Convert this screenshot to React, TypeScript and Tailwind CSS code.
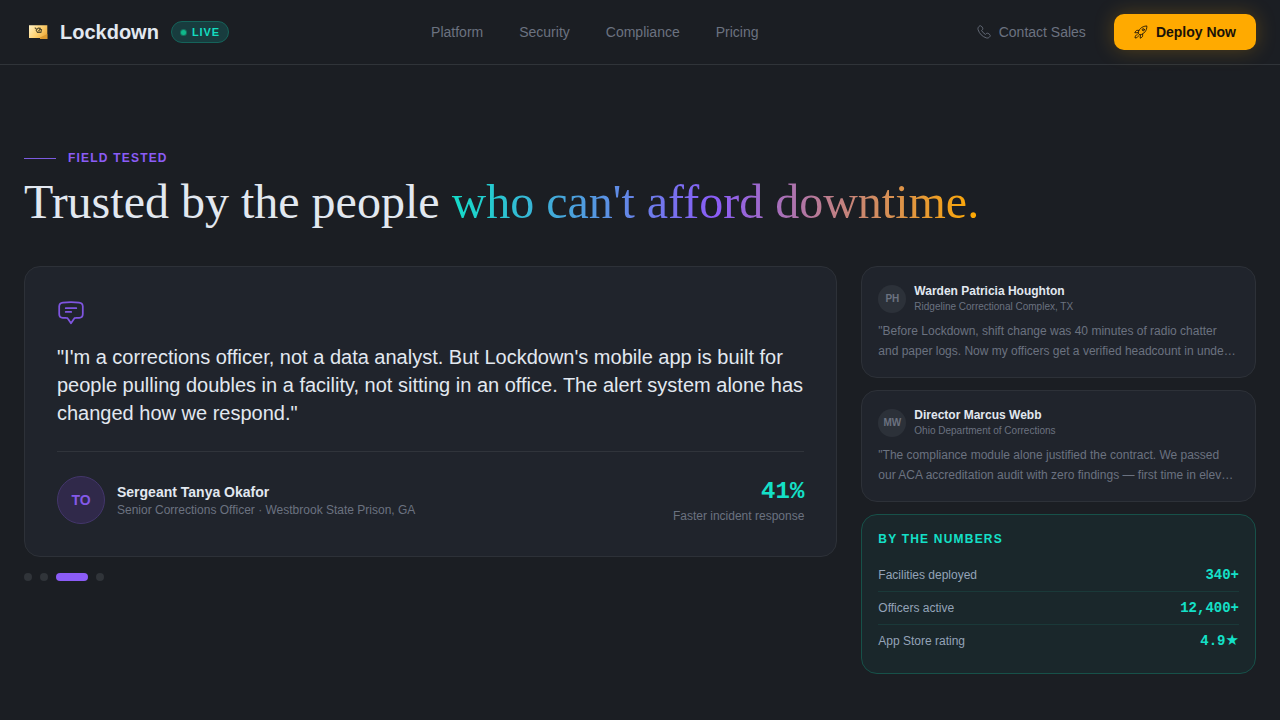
const links = ["Platform", "Security", "Compliance", "Pricing"];

const voices = [
  {
    initials: "PH",
    name: "Warden Patricia Houghton",
    place: "Ridgeline Correctional Complex, TX",
    quote:
      "\"Before Lockdown, shift change was 40 minutes of radio chatter and paper logs. Now my officers get a verified headcount in under four minutes.\"",
  },
  {
    initials: "MW",
    name: "Director Marcus Webb",
    place: "Ohio Department of Corrections",
    quote:
      "\"The compliance module alone justified the contract. We passed our ACA accreditation audit with zero findings — first time in eleven years.\"",
  },
];

const numbers = [
  { label: "Facilities deployed", value: "340+" },
  { label: "Officers active", value: "12,400+" },
  { label: "App Store rating", value: "4.9★" },
];

function LogoMark() {
  return (
    <svg width="28" height="28" viewBox="0 0 28 28" fill="none">
      <defs>
        <linearGradient id="mark" x1="5" y1="8" x2="23" y2="21" gradientUnits="userSpaceOnUse">
          <stop stopColor="#fff0c2" />
          <stop offset="0.45" stopColor="#ffd579" />
          <stop offset="1" stopColor="#e9a22e" />
        </linearGradient>
      </defs>
      <path d="M5 7.2h18.3v13.9H16v-1.2H5z" fill="url(#mark)" />
      <path d="M16 19.4l7.3-3.4v5.1H16z" fill="#dc9a30" />
      <path
        d="M10.8 9.6l1.9 1.8 1.6-1.4 2.6.2M12 12l1.5 2.4h3.4l.6-2.8-2.5-.5M14 12.8h2"
        stroke="#574d2d"
        strokeWidth="1.1"
      />
    </svg>
  );
}

function PhoneIcon() {
  return (
    <svg width="14" height="14" viewBox="0 0 24 24" fill="none" stroke="currentColor" strokeWidth="1.5" strokeLinejoin="round">
      <path d="M7.2 1.8C6 .9 4.5 1.3 3.3 2.6C1.8 4.2 1.2 6 1.9 8.1C4.2 15 9 19.8 15.9 22.1C18 22.8 19.8 22.2 21.4 20.7C22.7 19.5 23.1 18 22.2 16.8C21.1 15.4 19.8 14.5 18.2 14.1C17.2 13.8 16.4 14.2 15.7 14.9L14.5 16.1C11.7 14.6 9.4 12.3 7.9 9.5L9.1 8.3C9.8 7.6 10.2 6.8 9.9 5.8C9.5 4.2 8.6 2.9 7.2 1.8Z" />
    </svg>
  );
}

function RocketIcon() {
  return (
    <svg width="14" height="14" viewBox="0 0 24 24" fill="none" stroke="currentColor" strokeWidth="1.5" strokeLinecap="round" strokeLinejoin="round">
      <path d="M7 13.2C8.2 8.3 12.1 2.3 22 1.6C22.4 10 16.9 15.3 10.8 17Z" />
      <path d="M8.5 9.2H5.4C3.4 9.2 2.5 11.1 1.4 13.3L7 13.2M14.8 15.5V18.6C14.8 20.6 12.9 21.5 10.7 22.6L10.8 17" />
      <circle cx="15.9" cy="8.1" r="1.8" />
      <path d="M7.4 18.7C7.1 21 4.8 22 1.8 22.3C1.8 19.3 2.9 16.9 5.3 16.5" />
    </svg>
  );
}

function ChatIcon() {
  return (
    <svg width="28" height="28" viewBox="0 0 28 28" fill="none" stroke="#7f55e0" strokeWidth="1.75" strokeLinecap="round" strokeLinejoin="round">
      <path d="M6 3.6C11.2 3 16.8 3 22 3.6C24.5 3.9 25.7 5 25.8 7.2V15C25.8 17.4 24.7 18.7 22.2 18.8L18.6 18.9C17.8 18.9 17.3 19.2 16.9 19.9L14 24.3L11.1 19.9C10.7 19.2 10.2 18.9 9.4 18.9L5.8 18.8C3.3 18.7 2.2 17.4 2.2 15V7.2C2.3 5 3.5 3.9 6 3.6Z" />
      <path d="M8.7 9.2h10.6M8.7 12.9h5.5" />
    </svg>
  );
}

export default function App() {
  return (
    <div className="h-[720px] overflow-hidden bg-[#1b1e23] font-['Liberation_Sans',Arial,sans-serif] text-[#e2e8f0]">
      <header className="flex h-[65px] items-center justify-between border-b border-[#303439] px-6">
        <div className="flex items-center gap-3">
          <div className="flex items-center gap-2">
            <LogoMark />
            <span className="text-xl font-bold">Lockdown</span>
          </div>
          <div className="flex h-[22px] w-[58px] items-center gap-1.5 rounded-full border border-[#15635a] bg-[#183c3e] pl-[9px] text-[11px] font-bold tracking-[0.88px] text-[#14dcc0]">
            <span className="size-[5px] rounded-full bg-[#10b98c] ring-1 ring-[#15745f]" />
            LIVE
          </div>
        </div>
        <nav className="flex gap-9 text-sm text-[#6b7280]">
          {links.map((l) => (
            <a key={l}>{l}</a>
          ))}
        </nav>
        <div className="flex items-center gap-3">
          <a className="flex items-center gap-2 px-4 text-sm text-[#6b7280]">
            <PhoneIcon />
            Contact Sales
          </a>
          <button className="flex h-9 items-center gap-2 rounded-[10px] bg-[#ffaa00] px-5 text-sm font-bold text-[#1a1208] shadow-[0_0_20px_rgba(255,170,0,0.25)]">
            <RocketIcon />
            Deploy Now
          </button>
        </div>
      </header>

      <main className="px-6 pt-[85px]">
        <div className="flex items-center gap-3 text-xs font-bold tracking-[1.2px] text-[#8b5cf6]">
          <span className="h-px w-8 bg-[#7c5be0]" />
          FIELD TESTED
        </div>
        <h2 className="mt-3 font-['Liberation_Serif',serif] text-5xl leading-[48px]">
          Trusted by the people{" "}
          <span className="bg-linear-to-r/srgb from-[#14dcc8] via-[#8b5cf6] to-[#ffaa00] bg-clip-text text-transparent">
            who can't afford downtime.
          </span>
        </h2>

        <div className="mt-10 grid grid-cols-12 gap-6">
          <div className="col-span-8">
            <article className="rounded-2xl border border-[#2d3138] bg-[#20242c] p-8">
              <ChatIcon />
              <p className="mt-4 text-xl leading-7">
                "I'm a corrections officer, not a data analyst. But Lockdown's mobile app is built for people pulling
                doubles in a facility, not sitting in an office. The alert system alone has changed how we respond."
              </p>
              <div className="mt-6 flex items-center border-t border-[#30343b] pt-6">
                <div className="flex size-12 items-center justify-center rounded-full border border-[#43366b] bg-[#30294a] text-sm font-bold text-[#8459e8]">
                  TO
                </div>
                <div className="ml-3">
                  <div className="text-sm font-bold">Sergeant Tanya Okafor</div>
                  <div className="text-xs text-[#6b7280]">Senior Corrections Officer · Westbrook State Prison, GA</div>
                </div>
                <div className="ml-auto text-right">
                  <div className="font-['Liberation_Mono',monospace] text-2xl font-bold text-[#14e0c8]">41%</div>
                  <div className="text-xs text-[#6b7280]">Faster incident response</div>
                </div>
              </div>
            </article>
            <div className="mt-4 flex gap-2">
              <span className="size-2 rounded-full bg-[#303439]" />
              <span className="size-2 rounded-full bg-[#303439]" />
              <span className="h-2 w-8 rounded-full bg-[#8b5cf6]" />
              <span className="size-2 rounded-full bg-[#303439]" />
            </div>
          </div>

          <aside className="col-span-4 flex flex-col gap-3">
            {voices.map((v) => (
              <article key={v.initials} className="rounded-2xl border border-[#2d3138] bg-[#20242c] p-4">
                <div className="flex items-center gap-2">
                  <div className="flex size-7 items-center justify-center rounded-full bg-[#2c3139] text-[10px] font-bold text-[#6b7280]">
                    {v.initials}
                  </div>
                  <div>
                    <div className="text-xs font-bold">{v.name}</div>
                    <div className="text-[10px] leading-[15px] text-[#6b7280]">{v.place}</div>
                  </div>
                </div>
                <p className="mt-2 line-clamp-2 text-xs leading-relaxed text-[#6b7280]">{v.quote}</p>
              </article>
            ))}
            <section className="rounded-2xl border border-[#175149] bg-[#1a272b] p-4">
              <h3 className="mb-3 text-xs font-bold tracking-[1.2px] text-[#14e0c8]">BY THE NUMBERS</h3>
              {numbers.map((n) => (
                <div
                  key={n.label}
                  className="flex h-[33px] items-center justify-between border-b border-[#1a3939] last:h-8 last:border-b-0"
                >
                  <span className="text-xs text-[#94a3b8]">{n.label}</span>
                  <span className="flex font-['Liberation_Mono',monospace] text-sm font-bold text-[#14e0c8]">
                    {n.value.replace("★", "")}
                    {n.value.endsWith("★") && (
                      <span className="font-['DejaVu_Sans',sans-serif] text-[15px] leading-[18px]">★</span>
                    )}
                  </span>
                </div>
              ))}
            </section>
          </aside>
        </div>
      </main>
    </div>
  );
}
